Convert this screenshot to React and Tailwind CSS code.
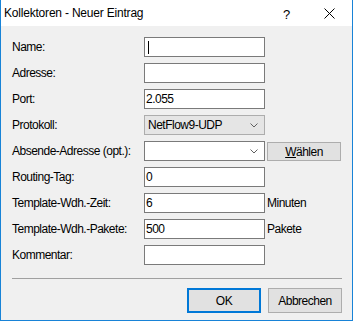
import React from "react";

const font = { fontFamily: '"Liberation Sans", Arial, sans-serif' };

function Input({ value, cursor }) {
  return (
    <div className="w-[121px] h-[20px] border border-[#7a7a7a] bg-white flex items-center pl-[1px] text-[12px] text-black">
      {cursor ? <span className="w-px h-[13px] bg-black ml-[2px]" /> : value}
    </div>
  );
}

function Chevron() {
  return (
    <svg width="8" height="5" viewBox="0 0 8 5" className="mr-[6px]">
      <path d="M0.5 0.5 L4 4 L7.5 0.5" fill="none" stroke="#606060" strokeWidth="1" />
    </svg>
  );
}

function Row({ label, children, extra }) {
  return (
    <div className="flex h-[20px] items-start">
      <div className="w-[132px] h-[20px] flex items-center text-[12px] text-black">{label}</div>
      {children}
      {extra}
    </div>
  );
}

export default function App() {
  return (
    <div className="w-[353px] h-[321px] flex flex-col bg-[#f0f0f0] border-l border-r border-b border-[#1883d7] overflow-hidden tracking-[-0.5px]" style={font}>
      <div className="h-[26px] bg-white flex items-center relative shrink-0">
        <span className="pl-[3px] text-[12px] text-black tracking-[-0.2px]">Kollektoren - Neuer Eintrag</span>
        <span className="absolute left-[282px] top-[5px] text-[13px] text-black">?</span>
        <svg className="absolute left-[323px] top-[8px]" width="11" height="11" viewBox="0 0 11 11">
          <path d="M0.5 0.5 L10.5 10.5 M10.5 0.5 L0.5 10.5" stroke="#000" strokeWidth="1" />
        </svg>
      </div>
      <div className="flex flex-col gap-[6px] pl-[11px] pt-[11px]">
        <Row label="Name:"><Input cursor /></Row>
        <Row label="Adresse:"><Input value="" /></Row>
        <Row label="Port:"><Input value="2.055" /></Row>
        <Row label="Protokoll:">
          <div className="w-[121px] h-[20px] border border-[#adadad] bg-[#e5e5e5] flex items-center justify-between pl-[3px] text-[12px] text-black">
            <span>NetFlow9-UDP</span>
            <Chevron />
          </div>
        </Row>
        <Row
          label="Absende-Adresse (opt.):"
          extra={
            <div className="ml-[2px] mt-[1px] w-[74px] h-[19px] border border-[#adadad] bg-[#e1e1e1] flex items-center justify-center text-[12px] text-black">
              <span><span className="underline">W</span>ählen</span>
            </div>
          }
        >
          <div className="w-[121px] h-[20px] border border-[#7a7a7a] bg-white flex items-center justify-end">
            <Chevron />
          </div>
        </Row>
        <Row label="Routing-Tag:"><Input value="0" /></Row>
        <Row
          label="Template-Wdh.-Zeit:"
          extra={<span className="ml-[2px] h-[20px] flex items-center text-[12px] text-black">Minuten</span>}
        >
          <Input value="6" />
        </Row>
        <Row
          label="Template-Wdh.-Pakete:"
          extra={<span className="ml-[2px] h-[20px] flex items-center text-[12px] text-black">Pakete</span>}
        >
          <Input value="500" />
        </Row>
        <Row label="Kommentar:"><Input value="" /></Row>
      </div>
      <div className="ml-[11px] mr-[10px] mt-[13px] h-px bg-[#a0a0a0]" />
      <div className="flex justify-end gap-[7px] mr-[10px] mt-[9px]">
        <div className="w-[74px] h-[25px] border-2 border-[#0078d7] bg-[#e1e1e1] flex items-center justify-center text-[12px] text-black">OK</div>
        <div className="w-[74px] h-[25px] border border-[#adadad] bg-[#e1e1e1] flex items-center justify-center text-[12px] text-black">Abbrechen</div>
      </div>
    </div>
  );
}
